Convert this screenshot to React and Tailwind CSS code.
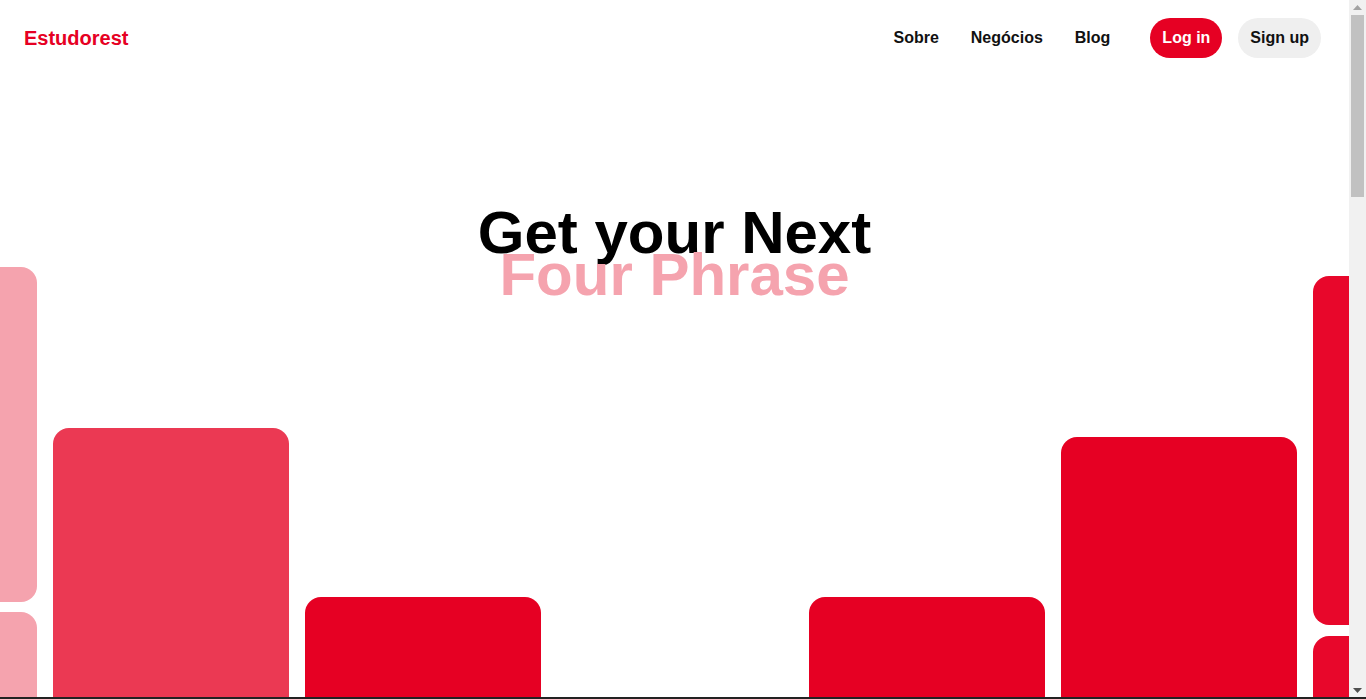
import React from "react";

const font = { fontFamily: '"Liberation Sans", Arial, sans-serif' };

function Card({ h, color, mb = "mb-[10px]" }) {
  return <div className={`w-[236px] shrink-0 rounded-2xl ${mb}`} style={{ height: h, background: color }} />;
}

const columns = [
  { pt: "pt-[191px]", color: "#f5a3ae", cards: [335, 340, 360, 330, 350, 340, 300] },
  { pt: "pt-[352px]", color: "#eb3953", cards: [360, 340, 330, 350, 340, 300] },
  { pt: "pt-[521px]", color: "#e60023", cards: [340, 350, 330, 360, 340] },
  { pt: "pt-[720px]", color: "#e60023", cards: [340, 350, 330, 360, 340] },
  { pt: "pt-[521px]", color: "#e60023", cards: [340, 350, 330, 360, 340] },
  { pt: "pt-[361px]", color: "#e60023", cards: [360, 340, 330, 350, 340, 300] },
  { pt: "pt-[200px]", color: "#e8072b", cards: [349, 340, 360, 330, 350, 340, 300] },
];

function FakeScrollbar() {
  return (
    <div className="fixed top-0 right-0 h-[699px] w-[17px] bg-[#f1f1f1] flex flex-col items-center">
      <div className="h-[15px] w-full flex items-center justify-center">
        <svg width="9" height="5" viewBox="0 0 9 5"><path d="M4.5 0 L9 5 L0 5 Z" fill="#a3a3a3" /></svg>
      </div>
      <div className="w-[13px] h-[182px] bg-[#c1c1c1]" />
      <div className="flex-1" />
      <div className="h-[17px] w-full flex items-start justify-center pt-[6px]">
        <svg width="9" height="5" viewBox="0 0 9 5"><path d="M0 0 L9 0 L4.5 5 Z" fill="#505050" /></svg>
      </div>
    </div>
  );
}

export default function App() {
  return (
    <div className="bg-white" style={font}>
      <div className="mr-[17px] h-[2554px] overflow-hidden">
        <header className="h-[76px] flex items-center justify-between pl-6 pr-[28px]">
          <a className="text-[20px] font-bold text-[#e60023] leading-none">Estudorest</a>
          <nav className="flex items-center">
            <a className="px-4 text-[16px] font-bold text-[#111]">Sobre</a>
            <a className="px-4 text-[16px] font-bold text-[#111]">Negócios</a>
            <a className="px-4 text-[16px] font-bold text-[#111]">Blog</a>
            <button className="ml-6 h-10 px-3 rounded-full bg-[#e60023] text-white text-[16px] font-bold">Log in</button>
            <button className="ml-4 h-10 px-3 rounded-full bg-[#efefef] text-[#111] text-[16px] font-bold">Sign up</button>
          </nav>
        </header>
        <section className="relative h-[2478px] overflow-hidden">
          <div className="flex justify-center">
            <div className="flex gap-4 shrink-0">
              {columns.map((c, i) => (
                <div key={i} className={`w-[236px] shrink-0 flex flex-col ${c.pt}`}>
                  {c.cards.map((h, j) => (
                    <Card key={j} h={h} color={c.color} mb={i === 6 ? "mb-[11px]" : "mb-[10px]"} />
                  ))}
                </div>
              ))}
            </div>
          </div>
          <div className="absolute left-0 right-0 top-[136px] text-center font-bold text-[60px] leading-[42px]">
            <div className="text-black">Get your Next</div>
            <div className="text-[#f5a3ae]">Four Phrase</div>
          </div>
        </section>
      </div>
      <FakeScrollbar />
      <div className="fixed left-0 right-0 bottom-0 h-[2px] bg-[#222]" />
    </div>
  );
}
